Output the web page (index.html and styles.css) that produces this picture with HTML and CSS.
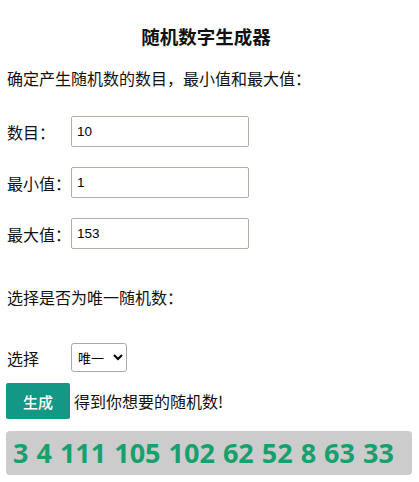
FILE: index.html
```html
<!DOCTYPE html>
<html lang="zh">
<head>
<meta charset="utf-8">
<title>随机数字生成器</title>
<link rel="stylesheet" href="styles.css">
</head>
<body>
<h3 class="title">随机数字生成器</h3>
<p class="intro">确定产生随机数的数目，最小值和最大值：</p>
<div class="fields">
  <label class="label">数目：</label><input class="field" type="text" value="10">
  <label class="label">最小值：</label><input class="field" type="text" value="1">
  <label class="label">最大值：</label><input class="field" type="text" value="153">
</div>
<p class="intro unique">选择是否为唯一随机数：</p>
<div class="choose">
  <label class="label">选择</label>
  <select class="select"><option>唯一</option><option>可重复</option></select>
</div>
<div class="action">
  <button class="btn">生成</button>
  <span class="hint">得到你想要的随机数!</span>
</div>
<div class="result">3 4 111 105 102 62 52 8 63 33</div>
</body>
</html>
```

FILE: styles.css
```css
html, body { background: #fff; }
body {
  margin: 0;
  padding: 0 6px;
  font-family: "Noto Sans CJK SC", "Noto Sans", sans-serif;
  font-size: 16px;
  color: #111;
}
.title {
  margin: 0;
  padding: 25px 7px 0 0;
  text-align: center;
  font-size: 18.5px;
  font-weight: bold;
  line-height: 22px;
}
.intro {
  margin: 0;
  padding: 0 1px;
  line-height: 22px;
}
.title + .intro { margin-top: 20px; }
.fields {
  display: grid;
  grid-template-columns: 65px 178px;
  row-gap: 20px;
  align-items: center;
  margin-top: 27px;
  padding-left: 0;
}
.label { line-height: 22px; padding-left: 1px; }
.field {
  box-sizing: border-box;
  height: 31px;
  width: 178px;
  margin: 0;
  border: 1px solid #b9aca4;
  border-radius: 2px;
  padding: 0 5px;
  font-family: "Liberation Sans", Arial, sans-serif;
  font-size: 13.5px;
  color: #000;
  background: #fff;
}
.unique { margin-top: 37px; }
.choose {
  display: grid;
  grid-template-columns: 65px auto;
  align-items: center;
  margin-top: 35px;
}
.select {
  box-sizing: border-box;
  width: 56px;
  height: 29px;
  border: 1px solid #aaa;
  border-radius: 3px;
  background: #fff;
  font-family: "Noto Sans CJK SC", sans-serif;
  font-size: 13px;
  color: #000;
  padding: 0 2px;
  justify-self: start;
}
.action {
  display: flex;
  align-items: center;
  gap: 4px;
  margin-top: 11px;
}
.btn {
  width: 64px;
  height: 36px;
  border: 0;
  border-radius: 2px;
  background: #139886;
  color: #fff;
  font-family: "Noto Sans CJK SC", sans-serif;
  font-size: 15px;
  font-weight: 500;
  padding: 0;
}
.hint { line-height: 22px; }
.result {
  margin-top: 12px;
  width: 406px;
  box-sizing: border-box;
  height: 44px;
  background: #cccccc;
  border-radius: 4px;
  padding: 0 7px;
  font-family: "Open Sans", sans-serif;
  font-weight: bold;
  font-size: 27px;
  word-spacing: 1px;
  line-height: 44px;
  color: #16a06d;
  white-space: nowrap;
  overflow: hidden;
}
```
